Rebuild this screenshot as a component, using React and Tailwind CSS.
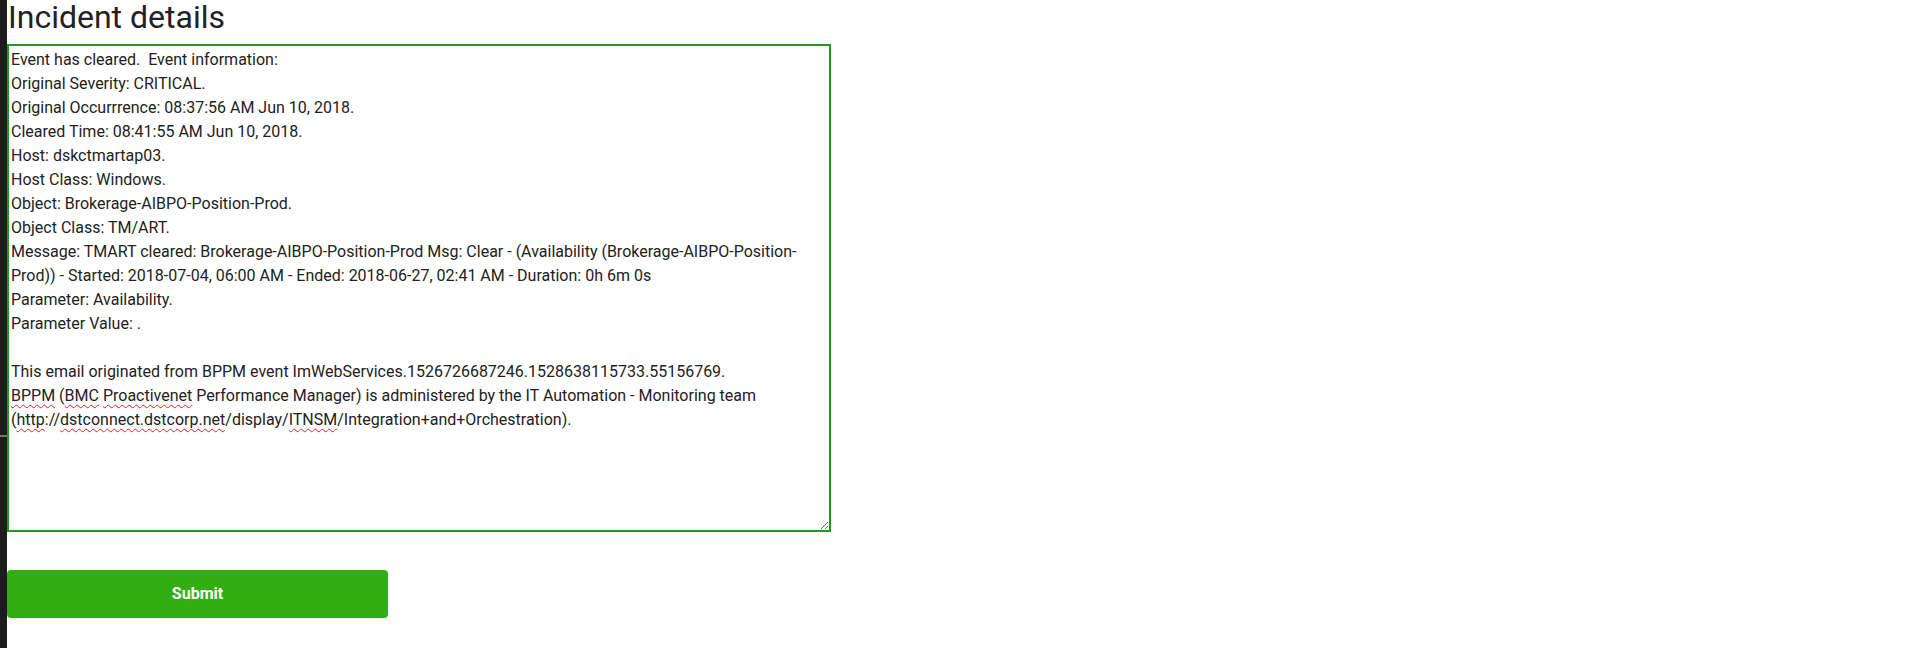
const LINES = [
  "Event has cleared.  Event information:",
  "Original Severity: CRITICAL.",
  "Original Occurrrence: 08:37:56 AM Jun 10, 2018.",
  "Cleared Time: 08:41:55 AM Jun 10, 2018.",
  "Host: dskctmartap03.",
  "Host Class: Windows.",
  "Object: Brokerage-AIBPO-Position-Prod.",
  "Object Class: TM/ART.",
  "Message: TMART cleared: Brokerage-AIBPO-Position-Prod Msg: Clear - (Availability (Brokerage-AIBPO-Position-Prod)) - Started: 2018-07-04, 06:00 AM - Ended: 2018-06-27, 02:41 AM - Duration: 0h 6m 0s",
  "Parameter: Availability.",
  "Parameter Value: .",
  "",
  "This email originated from BPPM event ImWebServices.1526726687246.1528638115733.55156769.",
];

// spellcheck-style squiggle
const Typo = ({ children }) => (
  <span className="underline decoration-wavy decoration-[#e0201b] decoration-1 underline-offset-[3px]">
    {children}
  </span>
);

export default function App() {
  return (
    <div className="h-screen overflow-y-scroll bg-white">
      <div className="flex min-h-[2150px] font-['Roboto',_'Liberation_Sans',_sans-serif] text-[#222]">
        {/* dark edge of the neighbouring window */}
        <div className="w-[7px] shrink-0 bg-[#1c1c1c] flex flex-col">
          <div className="h-[435px]" />
          <div className="h-[2px] w-[7px] bg-[#777]" />
        </div>

        <div className="flex-1 flex flex-col items-start">
          <h1 className="ml-[1px] text-[32px] leading-[34px] font-normal text-[#222]">
            Incident details
          </h1>

          <div className="mt-[10px] w-[824px] h-[488px] border-2 border-[#1f9b25] pt-[2px] pl-[2px] pr-[2px] text-[16px] leading-[24px] whitespace-pre-wrap resize overflow-auto">
            {LINES.map((l, i) => (
              <div key={i}>{l || "\u00a0"}</div>
            ))}
            <div>
              <Typo>BPPM</Typo> (<Typo>BMC</Typo> <Typo>Proactivenet</Typo> Performance Manager) is
              administered by the IT Automation - Monitoring team
            </div>
            <div>
              (<Typo>http</Typo>://<Typo>dstconnect.dstcorp.net</Typo>/display/<Typo>ITNSM</Typo>
              /Integration+and+Orchestration).
            </div>
          </div>

          <button className="mt-[38px] w-[381px] h-[48px] rounded-[4px] bg-[#34ad12] text-white text-[16px] font-bold">
            Submit
          </button>
        </div>
      </div>
    </div>
  );
}
